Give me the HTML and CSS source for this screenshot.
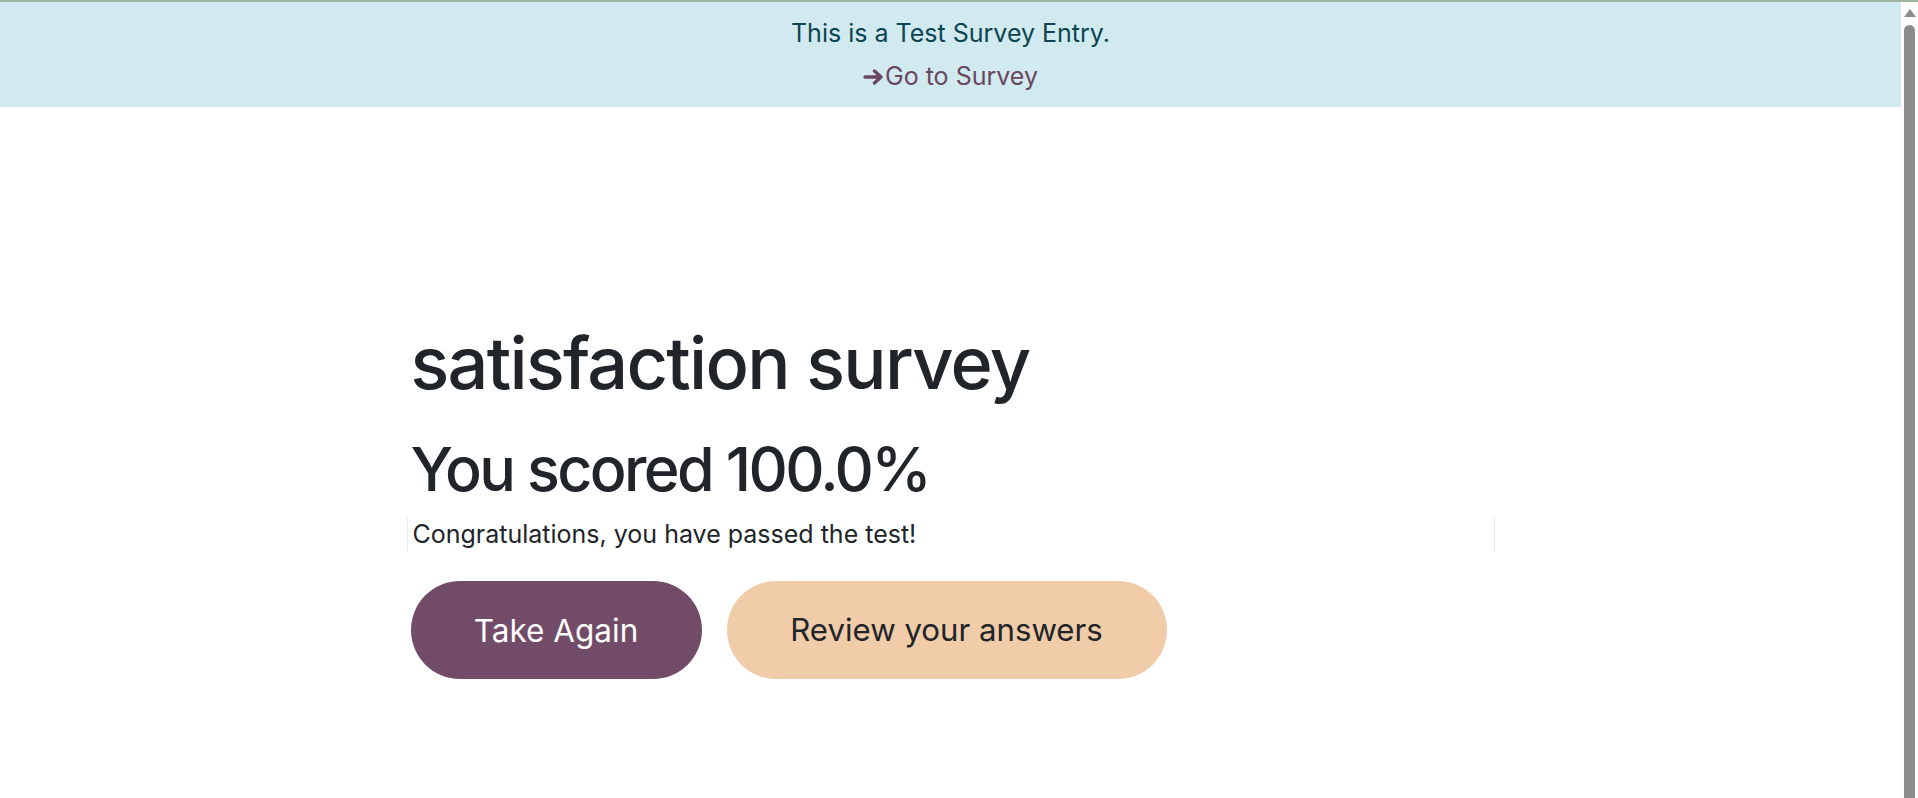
FILE: index.html
```html
<!DOCTYPE html>
<html lang="en">
<head>
<meta charset="utf-8">
<title>satisfaction survey</title>
<link rel="stylesheet" href="styles.css">
</head>
<body>
<div class="topline"></div>
<div class="page">
  <div class="test-banner">
    <div class="banner-text">This is a Test Survey Entry.</div>
    <a class="banner-link" href="#"><svg class="arrow" viewBox="0 0 22 16" width="22" height="16" aria-hidden="true"><path d="M2 8h16M11.5 2l6.5 6-6.5 6" fill="none" stroke="currentColor" stroke-width="3.4" stroke-linecap="round" stroke-linejoin="round"/></svg>Go to Survey</a>
  </div>
  <main class="wrap">
    <h1 class="survey-title">satisfaction survey</h1>
    <h2 class="score">You scored 100.0%</h2>
    <div class="result-msg">Congratulations, you have passed the test!</div>
    <div class="actions">
      <a class="btn btn-primary" href="#">Take Again</a>
      <a class="btn btn-secondary" href="#">Review your answers</a>
    </div>
  </main>
</div>
<div class="scrollbar" aria-hidden="true">
  <div class="sb-arrow"></div>
  <div class="sb-thumb"></div>
</div>
</body>
</html>
```
FILE: styles.css
```css
body {
  margin: 0;
  font-family: Inter, "Noto Sans", sans-serif;
  color: #212529;
  background: #ffffff;
  overflow: hidden;
}
.topline {
  height: 2px;
  background: #9fb5a2;
}
.page {
  margin-right: 17px;
}
.test-banner {
  background: #d1eaef;
  height: 105px;
  box-sizing: border-box;
  padding-top: 13px;
  text-align: center;
}
.banner-text {
  font-size: 25px;
  line-height: 36px;
  color: #0b4552;
}
.banner-link {
  display: inline-flex;
  align-items: center;
  margin-top: 9px;
  font-size: 25px;
  line-height: 32px;
  color: #6a4660;
  text-decoration: none;
}
.arrow {
  display: block;
  margin-top: 2px;
  color: #6a4660;
}
.wrap {
  width: 1088px;
  margin: 0 auto;
  padding-top: 213px;
}
.survey-title {
  margin: 0 0 0 4px;
  font-size: 72px;
  line-height: 86px;
  font-weight: 500;
  letter-spacing: -0.024em;
}
.score {
  margin: 25px 0 0 4px;
  font-size: 61px;
  line-height: 77px;
  font-weight: 500;
  letter-spacing: -0.043em;
}
.result-msg {
  margin-top: 9px;
  padding: 1px 5px;
  font-size: 25px;
  line-height: 33px;
  border-left: 1px solid #e9ecef;
  border-right: 1px solid #e9ecef;
}
.actions {
  display: flex;
  gap: 25px;
  margin: 29px 0 0 4px;
}
.btn {
  display: flex;
  align-items: center;
  justify-content: center;
  height: 98px;
  border-radius: 49px;
  font-size: 31.5px;
  text-decoration: none;
}
.btn-primary {
  width: 291px;
  background: #714b67;
  color: #ffffff;
}
.btn-secondary {
  width: 440px;
  background: #f1cca8;
  color: #212529;
  font-size: 31.2px;
}
.scrollbar {
  position: fixed;
  top: 2px;
  right: 0;
  bottom: 0;
  width: 17px;
  background: #fcfcfc;
  display: flex;
  flex-direction: column;
  align-items: center;
}
.sb-arrow {
  margin-top: 7px;
  width: 0;
  height: 0;
  border-left: 6px solid transparent;
  border-right: 6px solid transparent;
  border-bottom: 8px solid #8c8c8c;
}
.sb-thumb {
  margin-top: 8px;
  width: 11px;
  flex: 1;
  background: #8c8c8c;
  border-radius: 6px 6px 0 0;
}
```
